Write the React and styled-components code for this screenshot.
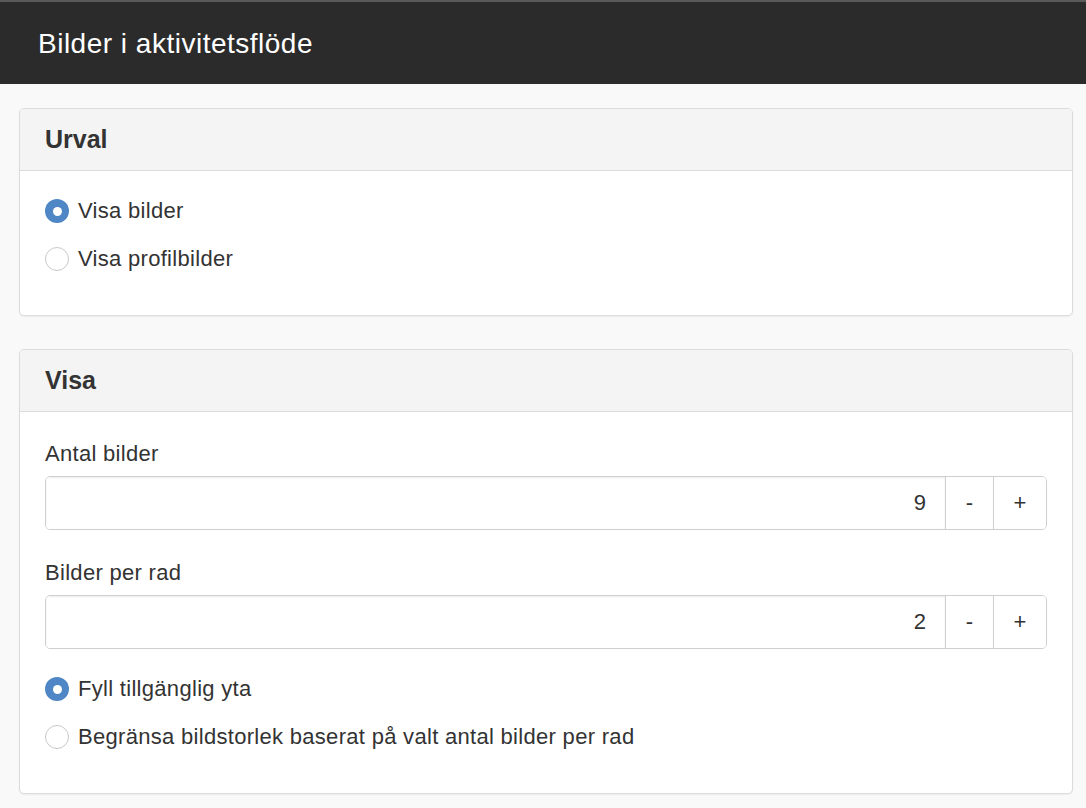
import React, { useState } from 'react'
import styled, { createGlobalStyle } from 'styled-components'

const GlobalStyle = createGlobalStyle`
  html, body {
    margin: 0;
    padding: 0;
    background: #f9f9f9;
    font-family: "Liberation Sans", Arial, sans-serif;
    color: #333;
  }
`

const TopBar = styled.div`
  height: 82px;
  background: #2b2b2b;
  border-top: 2px solid #5a5a5a;
  display: flex;
  align-items: center;
  padding-left: 38px;
`

const Title = styled.h1`
  margin: 0;
  color: #fff;
  font-size: 28px;
  letter-spacing: 0.5px;
  font-weight: 400;
  padding-top: 2px;
`

const Page = styled.div`
  padding: 24px 13px 12px 19px;
  display: flex;
  flex-direction: column;
  gap: 33px;
`

const Card = styled.section`
  background: #fff;
  border: 1px solid #dcdcdc;
  border-radius: 5px;
  box-shadow: 0 1px 2px rgba(0, 0, 0, 0.06);
  overflow: hidden;
`

const CardHeader = styled.div`
  height: 61px;
  background: #f4f4f4;
  border-bottom: 1px solid #dcdcdc;
  display: flex;
  align-items: center;
  padding-left: 25px;
`

const CardTitle = styled.h2`
  margin: 0;
  font-size: 25px;
  font-weight: 700;
  color: #333;
`

const CardBody = styled.div`
  padding: 27px 25px 32px 25px;
`

const RadioRow = styled.label`
  display: flex;
  align-items: center;
  gap: 9px;
  height: 48px;
  font-size: 22px;
  letter-spacing: 0.3px;
  cursor: pointer;
  margin-top: ${p => (p.$first ? '-11px' : '0')};
`

const RadioDot = styled.span`
  width: 24px;
  height: 24px;
  border-radius: 50%;
  box-sizing: border-box;
  flex-shrink: 0;
  background: ${p => (p.$checked ? '#4f86c6' : '#fff')};
  border: ${p => (p.$checked ? 'none' : '1px solid #c8c8c8')};
  display: flex;
  align-items: center;
  justify-content: center;

  &::after {
    content: '';
    display: ${p => (p.$checked ? 'block' : 'none')};
    width: 9px;
    height: 9px;
    border-radius: 50%;
    background: #fff;
  }
`

const FieldLabel = styled.div`
  font-size: 22px;
  letter-spacing: 0.3px;
  line-height: 24px;
  margin-bottom: 10px;
  margin-top: ${p => (p.$first ? '3px' : '0')};
`

const Stepper = styled.div`
  display: flex;
  height: 54px;
  border: 1px solid #cfcfcf;
  border-radius: 5px;
  box-sizing: border-box;
  overflow: hidden;
  margin-bottom: ${p => p.$mb || '31px'};
`

const NumberInput = styled.input`
  flex: 1;
  min-width: 0;
  border: none;
  outline: none;
  text-align: right;
  padding: 0 19px 0 0;
  font-family: inherit;
  font-size: 22px;
  color: #333;
  background: #fff;
  box-shadow: inset 0 1px 2px rgba(0, 0, 0, 0.08);
`

const StepButton = styled.button`
  width: ${p => p.$w || '48px'};
  border: none;
  border-left: 1px solid #cfcfcf;
  background: #fff;
  font-family: inherit;
  font-size: 22px;
  color: #333;
  padding: 0;
  cursor: pointer;
`

function Radio({ checked, label, onSelect, first }) {
  return (
    <RadioRow $first={first} onClick={onSelect}>
      <RadioDot $checked={checked} />
      <span>{label}</span>
    </RadioRow>
  )
}

function NumberStepper({ value, onChange, mb }) {
  return (
    <Stepper $mb={mb}>
      <NumberInput value={value} onChange={e => onChange(e.target.value)} />
      <StepButton onClick={() => onChange(Math.max(0, Number(value) - 1))}>-</StepButton>
      <StepButton $w="53px" onClick={() => onChange(Number(value) + 1)}>+</StepButton>
    </Stepper>
  )
}

export default function App() {
  const [source, setSource] = useState('bilder')
  const [count, setCount] = useState(9)
  const [perRow, setPerRow] = useState(2)
  const [fill, setFill] = useState('fill')

  return (
    <>
      <GlobalStyle />
      <TopBar>
        <Title>Bilder i aktivitetsflöde</Title>
      </TopBar>
      <Page>
        <Card>
          <CardHeader>
            <CardTitle>Urval</CardTitle>
          </CardHeader>
          <CardBody>
            <Radio first checked={source === 'bilder'} label="Visa bilder" onSelect={() => setSource('bilder')} />
            <Radio checked={source === 'profil'} label="Visa profilbilder" onSelect={() => setSource('profil')} />
          </CardBody>
        </Card>
        <Card>
          <CardHeader>
            <CardTitle>Visa</CardTitle>
          </CardHeader>
          <CardBody>
            <FieldLabel $first>Antal bilder</FieldLabel>
            <NumberStepper value={count} onChange={setCount} />
            <FieldLabel>Bilder per rad</FieldLabel>
            <NumberStepper value={perRow} onChange={setPerRow} mb="16px" />
            <Radio checked={fill === 'fill'} label="Fyll tillgänglig yta" onSelect={() => setFill('fill')} />
            <Radio
              checked={fill === 'limit'}
              label="Begränsa bildstorlek baserat på valt antal bilder per rad"
              onSelect={() => setFill('limit')}
            />
          </CardBody>
        </Card>
      </Page>
    </>
  )
}
